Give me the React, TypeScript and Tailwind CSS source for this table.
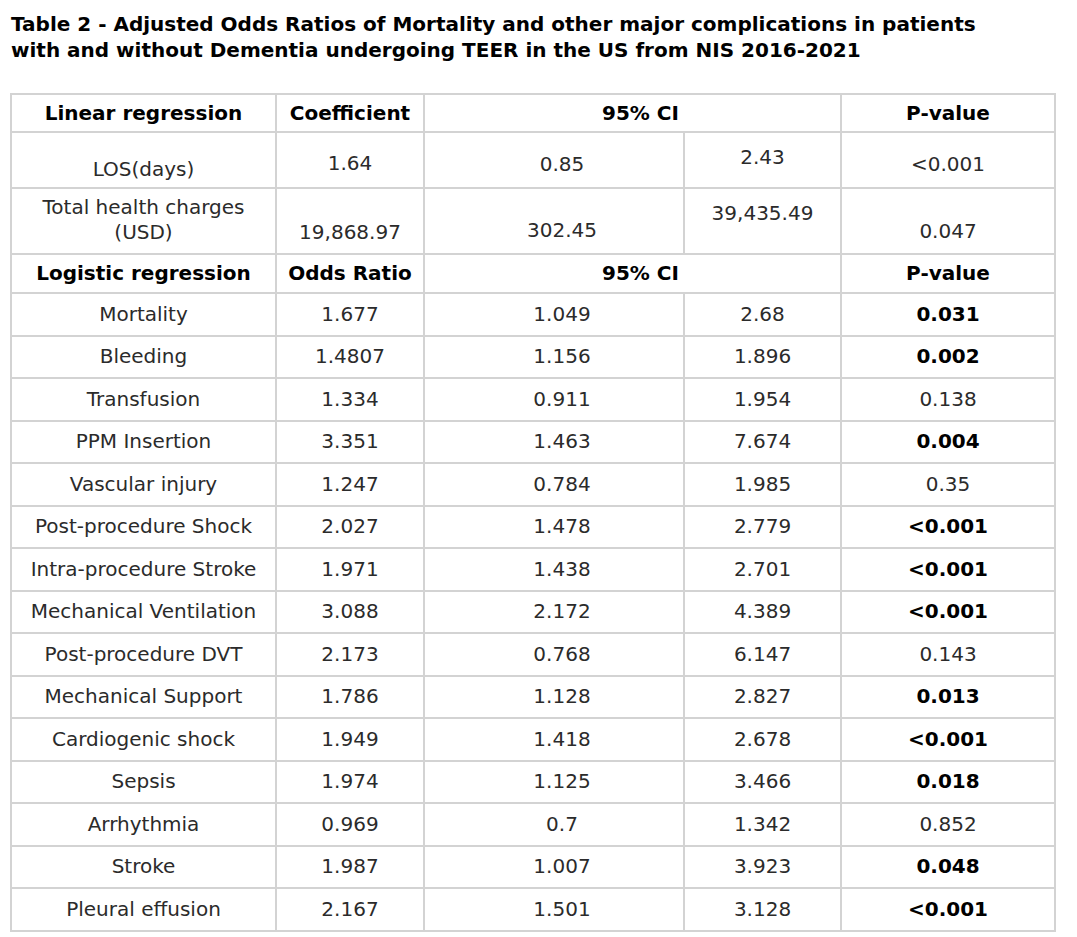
import React from "react";

interface OddsRow {
  label: string;
  ratio: string;
  low: string;
  high: string;
  p: string;
  sig: boolean;
}

const LOGISTIC: OddsRow[] = [
  { label: "Mortality", ratio: "1.677", low: "1.049", high: "2.68", p: "0.031", sig: true },
  { label: "Bleeding", ratio: "1.4807", low: "1.156", high: "1.896", p: "0.002", sig: true },
  { label: "Transfusion", ratio: "1.334", low: "0.911", high: "1.954", p: "0.138", sig: false },
  { label: "PPM Insertion", ratio: "3.351", low: "1.463", high: "7.674", p: "0.004", sig: true },
  { label: "Vascular injury", ratio: "1.247", low: "0.784", high: "1.985", p: "0.35", sig: false },
  { label: "Post-procedure Shock", ratio: "2.027", low: "1.478", high: "2.779", p: "<0.001", sig: true },
  { label: "Intra-procedure Stroke", ratio: "1.971", low: "1.438", high: "2.701", p: "<0.001", sig: true },
  { label: "Mechanical Ventilation", ratio: "3.088", low: "2.172", high: "4.389", p: "<0.001", sig: true },
  { label: "Post-procedure DVT", ratio: "2.173", low: "0.768", high: "6.147", p: "0.143", sig: false },
  { label: "Mechanical Support", ratio: "1.786", low: "1.128", high: "2.827", p: "0.013", sig: true },
  { label: "Cardiogenic shock", ratio: "1.949", low: "1.418", high: "2.678", p: "<0.001", sig: true },
  { label: "Sepsis", ratio: "1.974", low: "1.125", high: "3.466", p: "0.018", sig: true },
  { label: "Arrhythmia", ratio: "0.969", low: "0.7", high: "1.342", p: "0.852", sig: false },
  { label: "Stroke", ratio: "1.987", low: "1.007", high: "3.923", p: "0.048", sig: true },
  { label: "Pleural effusion", ratio: "2.167", low: "1.501", high: "3.128", p: "<0.001", sig: true },
];

const cell = "border-2 border-[#d3d3d3] p-0 text-center align-middle leading-[23px]";
const topCell = "border-2 border-[#d3d3d3] p-0 text-center align-top leading-[16px]";

export default function App() {
  return (
    <div className="min-h-screen bg-white font-['DejaVu_Sans',sans-serif] text-[#2b2b2b]">
      <h1 className="ml-[11px] pt-[11px] text-[20px] font-bold leading-[26px] text-black">
        Table 2 - Adjusted Odds Ratios of Mortality and other major complications in patients
        <br />
        with and without Dementia undergoing TEER in the US from NIS 2016-2021
      </h1>

      <table className="ml-[10px] mt-[30px] w-[1044px] table-fixed border-collapse text-[20px]">
        <colgroup>
          <col className="w-[265px]" />
          <col className="w-[148px]" />
          <col className="w-[260px]" />
          <col className="w-[157px]" />
          <col className="w-[214px]" />
        </colgroup>
        <tbody>
          {/* Linear regression */}
          <tr className="h-[38px] font-bold text-black">
            <td className={cell}>Linear regression</td>
            <td className={cell}>Coefficient</td>
            <td colSpan={2} className={`${cell} pl-4`}>95% CI</td>
            <td className={cell}>P-value</td>
          </tr>
          <tr className="h-[56px]">
            <td className={`${topCell} pt-[28px]`}>LOS(days)</td>
            <td className={`${topCell} pt-[22px]`}>1.64</td>
            <td className={`${topCell} pt-[23px] pl-4`}>0.85</td>
            <td className={`${topCell} pt-[16px]`}>2.43</td>
            <td className={`${topCell} pt-[23px]`}>&lt;0.001</td>
          </tr>
          <tr className="h-[65.5px]">
            <td className="border-2 border-[#d3d3d3] p-0 pt-[6px] text-center align-top leading-[25px]">
              Total health charges
              <br />
              (USD)
            </td>
            <td className={`${topCell} pt-[35px]`}>19,868.97</td>
            <td className={`${topCell} pt-[33px] pl-4`}>302.45</td>
            <td className={`${topCell} pt-[16px]`}>39,435.49</td>
            <td className={`${topCell} pt-[34px]`}>0.047</td>
          </tr>

          {/* Logistic regression */}
          <tr className="h-[39.5px] font-bold text-black">
            <td className={cell}>Logistic regression</td>
            <td className={cell}>Odds Ratio</td>
            <td colSpan={2} className={`${cell} pl-4`}>95% CI</td>
            <td className={cell}>P-value</td>
          </tr>
          {LOGISTIC.map((r) => (
            <tr key={r.label} className="h-[42.5px]">
              <td className={cell}>{r.label}</td>
              <td className={cell}>{r.ratio}</td>
              <td className={`${cell} pl-4`}>{r.low}</td>
              <td className={cell}>{r.high}</td>
              <td className={`${cell} ${r.sig ? "font-bold text-black" : ""}`}>{r.p}</td>
            </tr>
          ))}
        </tbody>
      </table>
    </div>
  );
}
